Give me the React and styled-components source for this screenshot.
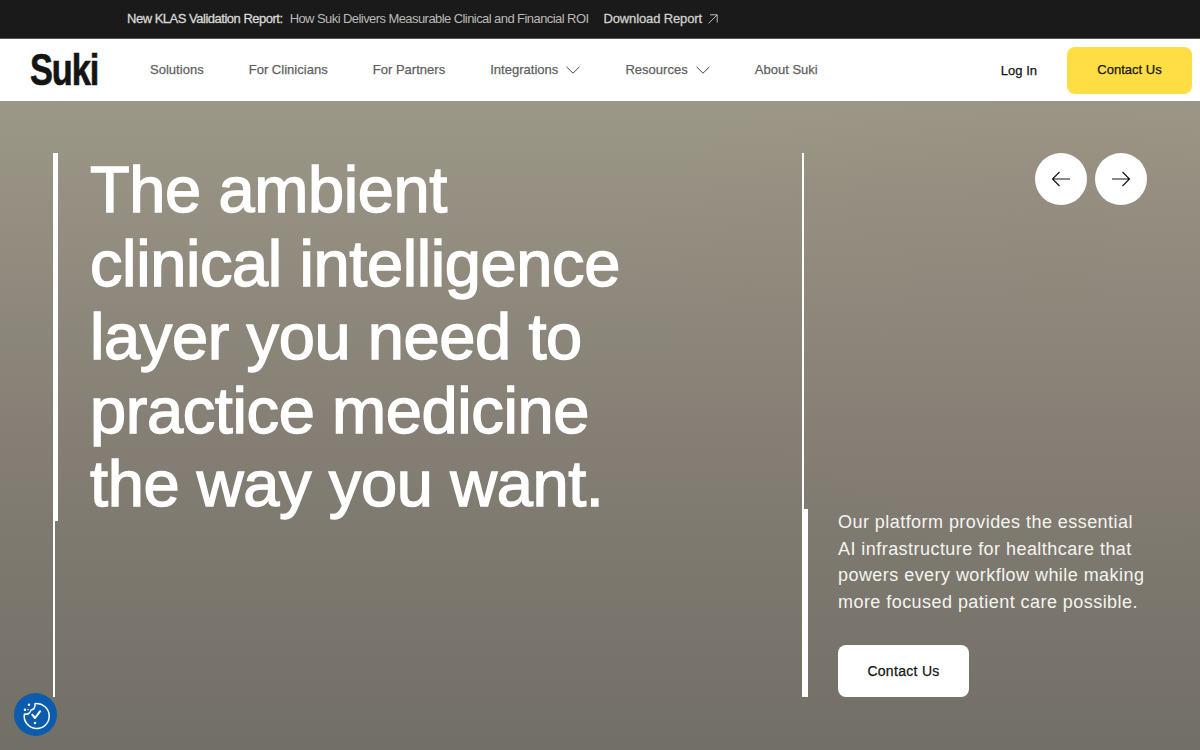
import React from "react"
import styled, { createGlobalStyle } from "styled-components"

const GlobalStyle = createGlobalStyle`
  html, body {
    margin: 0;
    padding: 0;
    height: 100%;
    overflow: hidden;
    font-family: "Liberation Sans", Arial, sans-serif;
  }
  * {
    box-sizing: border-box;
  }
`

const Page = styled.div`
  position: relative;
  display: flex;
  flex-direction: column;
  width: 1200px;
  height: 750px;
  overflow: hidden;
`

const PromoBar = styled.div`
  display: flex;
  align-items: center;
  height: 39px;
  flex-shrink: 0;
  padding: 0 0 1px 127px;
  background: #1a1a1a;
  border-bottom: 1px solid #555;
  font-size: 13px;
`
const PromoTitle = styled.span`
  color: #d8d8d4;
  -webkit-text-stroke: 0.3px #d8d8d4;
  letter-spacing: -0.49px;
  margin-right: 7px;
`
const PromoText = styled.span`
  color: #b9b9b5;
  letter-spacing: -0.57px;
  margin-right: 15px;
`
const PromoLink = styled.span`
  display: flex;
  align-items: center;
  gap: 6px;
  color: #cfcfcb;
  -webkit-text-stroke: 0.3px #cfcfcb;
  letter-spacing: -0.13px;
`
const LinkIcon = styled.svg`
  width: 10px;
  height: 10px;
  margin-top: 1px;
`

const Nav = styled.nav`
  display: flex;
  align-items: center;
  height: 62px;
  flex-shrink: 0;
  padding: 0 8px 0 30px;
  background: #fff;
`
const Logo = styled.div`
  width: 68px;
  margin-right: 52px;
  font-size: 44px;
  font-weight: 700;
  line-height: 1;
  letter-spacing: -1.4px;
  color: #141414;
  transform: scaleX(0.78);
  transform-origin: left center;
  -webkit-text-stroke: 0.7px #141414;
`
const NavLinks = styled.div`
  display: flex;
  align-items: center;
  gap: 45px;
  padding-bottom: 1px;
`
const NavItem = styled.span`
  display: flex;
  align-items: center;
  gap: 8px;
  font-size: 13px;
  letter-spacing: 0.02px;
  color: #5f5f5f;
  -webkit-text-stroke: 0.25px #5f5f5f;
`
const Chevron = styled.svg`
  width: 14px;
  height: 8px;
`
const NavActions = styled.div`
  display: flex;
  align-items: center;
  gap: 30px;
  margin-left: auto;
`
const LogIn = styled.span`
  font-size: 13px;
  color: #141414;
  -webkit-text-stroke: 0.25px #141414;
`
const YellowButton = styled.span`
  display: flex;
  align-items: center;
  justify-content: center;
  width: 125px;
  height: 47px;
  padding-bottom: 1px;
  border-radius: 8px;
  background: #ffde45;
  font-size: 13px;
  color: #141414;
  -webkit-text-stroke: 0.25px #141414;
`

const Hero = styled.section`
  display: grid;
  grid-template-columns: 749px 1fr;
  flex: 1;
  padding: 52px 53px 53px;
  background:
    radial-gradient(ellipse 420px 300px at 88% 25%, rgba(150, 128, 120, 0.22), transparent),
    linear-gradient(180deg, #9c9887 0%, #857f75 50%, #726f66 100%);
`
const LeftColumn = styled.div`
  border-left: 2px solid #fff;
`
const Headline = styled.h1`
  width: 600px;
  margin: 0 0 0 -2px;
  padding-left: 32px;
  border-left: 5px solid #fff;
  font-size: 65px;
  font-weight: 400;
  line-height: 73.6px;
  letter-spacing: -0.4px;
  color: #fff;
  -webkit-text-stroke: 1.4px #fff;
`
const RightColumn = styled.div`
  display: flex;
  flex-direction: column;
  justify-content: space-between;
  border-left: 2px solid #fff;
`
const Arrows = styled.div`
  display: flex;
  justify-content: flex-end;
  gap: 8px;
`
const ArrowButton = styled.span`
  display: flex;
  align-items: center;
  justify-content: center;
  width: 52px;
  height: 52px;
  border-radius: 50%;
  background: #fff;
`
const Intro = styled.div`
  margin-left: -1px;
  padding-left: 30px;
  border-left: 5px solid #fff;
`
const IntroText = styled.p`
  margin: 0 0 29px;
  font-size: 18px;
  line-height: 26.8px;
  letter-spacing: 0.45px;
  white-space: nowrap;
  color: #f4f4f0;
`
const WhiteButton = styled.span`
  display: flex;
  align-items: center;
  justify-content: center;
  width: 131px;
  height: 52px;
  border-radius: 8px;
  background: #fff;
  font-size: 14px;
  letter-spacing: 0.3px;
  color: #141414;
  -webkit-text-stroke: 0.25px #141414;
`

const ConsentBadge = styled.div`
  position: absolute;
  left: 14px;
  bottom: 14px;
  display: flex;
  align-items: center;
  justify-content: center;
  width: 43px;
  height: 43px;
  border-radius: 50%;
  background: #0b5cad;
`

const ChevronIcon = () => (
  <Chevron viewBox="0 0 14 8" fill="none" stroke="#444" strokeWidth="1">
    <path d="M0.5 0.8 L7 7.2 L13.5 0.8" />
  </Chevron>
)

const App = () => {
  return (
    <Page>
      <GlobalStyle />
      <PromoBar>
        <PromoTitle>New KLAS Validation Report:</PromoTitle>
        <PromoText>How Suki Delivers Measurable Clinical and Financial ROI</PromoText>
        <PromoLink>
          Download Report
          <LinkIcon viewBox="0 0 10 10" fill="none" stroke="#cfcfcb" strokeWidth="0.9">
            <path d="M0.6 9.4 L9 1 M2 0.8 H9.2 V8.5" />
          </LinkIcon>
        </PromoLink>
      </PromoBar>
      <Nav>
        <Logo>Suki</Logo>
        <NavLinks>
          <NavItem>Solutions</NavItem>
          <NavItem>For Clinicians</NavItem>
          <NavItem>For Partners</NavItem>
          <NavItem>
            Integrations <ChevronIcon />
          </NavItem>
          <NavItem>
            Resources <ChevronIcon />
          </NavItem>
          <NavItem>About Suki</NavItem>
        </NavLinks>
        <NavActions>
          <LogIn>Log In</LogIn>
          <YellowButton>Contact Us</YellowButton>
        </NavActions>
      </Nav>
      <Hero>
        <LeftColumn>
          <Headline>
            The ambient
            <br />
            clinical intelligence
            <br />
            layer you need to
            <br />
            practice medicine
            <br />
            the way you want.
          </Headline>
        </LeftColumn>
        <RightColumn>
          <Arrows>
            <ArrowButton>
              <svg width="20" height="16" viewBox="0 0 20 16" fill="none" stroke="#141414" strokeWidth="1.2">
                <path d="M19 8 H1.5 M8.5 1 L1.5 8 L8.5 15" />
              </svg>
            </ArrowButton>
            <ArrowButton>
              <svg width="20" height="16" viewBox="0 0 20 16" fill="none" stroke="#141414" strokeWidth="1.2">
                <path d="M1 8 H18.5 M11.5 1 L18.5 8 L11.5 15" />
              </svg>
            </ArrowButton>
          </Arrows>
          <Intro>
            <IntroText>
              Our platform provides the essential
              <br />
              AI infrastructure for healthcare that
              <br />
              powers every workflow while making
              <br />
              more focused patient care possible.
            </IntroText>
            <WhiteButton>Contact Us</WhiteButton>
          </Intro>
        </RightColumn>
      </Hero>
      <ConsentBadge>
        <svg width="30" height="30" viewBox="0 0 30 30" fill="none" stroke="#fff" strokeLinecap="round" strokeLinejoin="round">
          <path d="M14 3.7 A12.5 12.5 0 1 1 3.4 14 C6.5 15 9.5 13 10 10 C12.5 10 14.5 7.5 14 3.7 Z" strokeWidth="1.5" />
          <path d="M11.3 14.7 L14 18 L19 11.3" strokeWidth="2" />
          <circle cx="14" cy="23" r="1.2" fill="#fff" stroke="none" />
          <circle cx="8" cy="4.7" r="1.2" fill="#fff" stroke="none" />
          <circle cx="4" cy="9.7" r="1.2" fill="#fff" stroke="none" />
          <circle cx="7" cy="9.7" r="0.7" fill="#fff" stroke="none" />
        </svg>
      </ConsentBadge>
    </Page>
  )
}
export default App
